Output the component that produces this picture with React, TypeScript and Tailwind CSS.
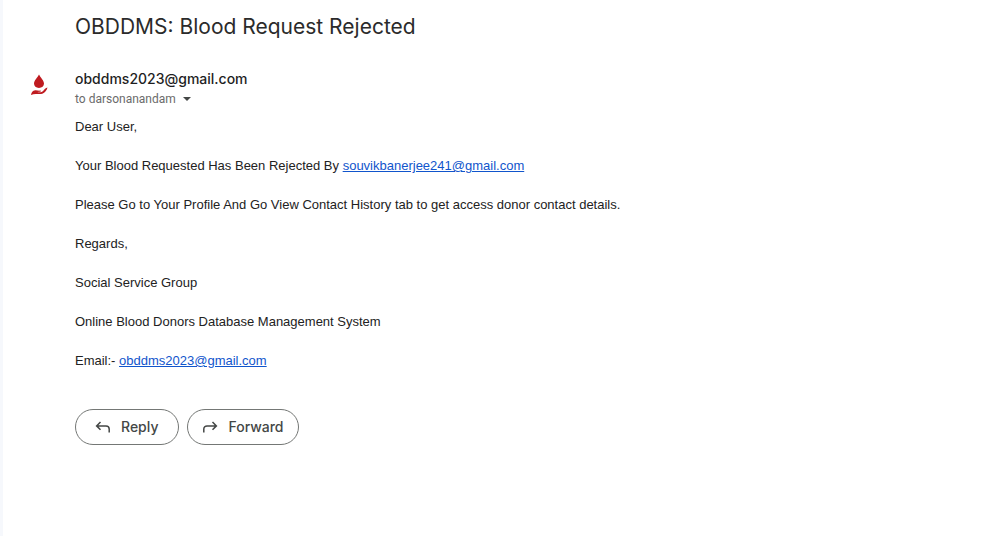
import React from "react";

const SENDER = "obddms2023@gmail.com";

function DonorLogo() {
  return (
    <svg viewBox="0 0 20 24" className="h-6 w-5" aria-hidden="true">
      <path
        d="M10 1.400C11.300 4.400 15 7 15 10.600c0 2.700-2.100 4.300-5 4.300s-5-1.600-5-4.300C5 7 8.700 4.400 10 1.400Z"
        fill="#bf1b20"
      />
      <path
        d="M2 21.900C2.400 19.500 3.600 17.400 6.200 17.200c1.900-.1 3.200.6 4.900.4 1.200-.1 1.100 1-.1 1.200l-2.700.3c2.700.5 4.500.1 6-1.400 1.100-1.200 2.200-2.900 4.200-3.100-.6 2.600-2.600 5.200-5.200 6.100-2.300.8-4.300.1-6.500.2C5 21 3.600 21.300 2 21.900Z"
        fill="#bf1b20"
      />
    </svg>
  );
}

function ReplyIcon() {
  return (
    <svg
      viewBox="0 0 16 14"
      className="h-3.5 w-4"
      fill="none"
      stroke="currentColor"
      strokeWidth="1.5"
      aria-hidden="true"
    >
      <path d="M5.500 2 1.600 5.900l3.900 3.900M1.800 5.900H11a3.200 3.200 0 0 1 3.200 3.200V12.500" />
    </svg>
  );
}

function ForwardIcon() {
  return (
    <svg
      viewBox="0 0 16 14"
      className="h-3.5 w-4"
      fill="none"
      stroke="currentColor"
      strokeWidth="1.5"
      aria-hidden="true"
    >
      <path d="M10.500 2 14.400 5.900l-3.900 3.900M14.200 5.900H5a3.200 3.200 0 0 0-3.200 3.200V12.500" />
    </svg>
  );
}

function MailLink({ address }: { address: string }) {
  return (
    <a href={`mailto:${address}`} className="text-[#1155cc] underline">
      {address}
    </a>
  );
}

const actionClass =
  "flex h-9 items-center rounded-full border border-[#747775] text-sm font-medium text-[#444746] font-['Inter',sans-serif]";

export default function App() {
  return (
    <div className="min-h-screen border-l-3 border-[#f6f8fc] bg-white pl-[26px] text-[#222222] font-['Liberation_Sans',Arial,sans-serif]">
      <h1 className="pt-[13px] pl-[46px] text-[21px] leading-7 text-[#2b2b2b] font-['Inter',sans-serif]">
        OBDDMS: Blood Request Rejected
      </h1>
      <article className="mt-[27px] flex">
        <div className="w-[46px] shrink-0 pt-[5px]">
          <DonorLogo />
        </div>
        <div className="min-w-0 flex-1">
          <header>
            <h2 className="text-sm leading-[22px] font-medium text-[#1f1f1f] font-['Inter',sans-serif]">
              {SENDER}
            </h2>
            <button
              type="button"
              aria-label="Show details"
              className="flex h-[18px] items-center gap-[7px] text-xs text-[#6b6b6b] font-['Roboto',sans-serif]"
            >
              to darsonanandam
              <svg viewBox="0 0 8 4" className="h-1 w-2" aria-hidden="true">
                <path d="M0 0h8L4 4Z" fill="#444746" />
              </svg>
            </button>
          </header>
          <div className="mt-[9px] flex flex-col gap-5 text-[13px] leading-[19px]">
            <p>Dear User,</p>
            <p>
              Your Blood Requested Has Been Rejected By{" "}
              <MailLink address="souvikbanerjee241@gmail.com" />
            </p>
            <p>
              Please Go to Your Profile And Go View Contact History tab to get
              access donor contact details.
            </p>
            <p>Regards,</p>
            <p>Social Service Group</p>
            <p>Online Blood Donors Database Management System</p>
            <p>
              Email:- <MailLink address={SENDER} />
            </p>
          </div>
          <div className="mt-[39px] flex gap-2">
            <button type="button" className={`${actionClass} gap-2.5 pr-5 pl-[19px]`}>
              <ReplyIcon />
              Reply
            </button>
            <button type="button" className={`${actionClass} gap-2.5 pr-3.5 pl-3.5`}>
              <ForwardIcon />
              Forward
            </button>
          </div>
        </div>
      </article>
    </div>
  );
}
